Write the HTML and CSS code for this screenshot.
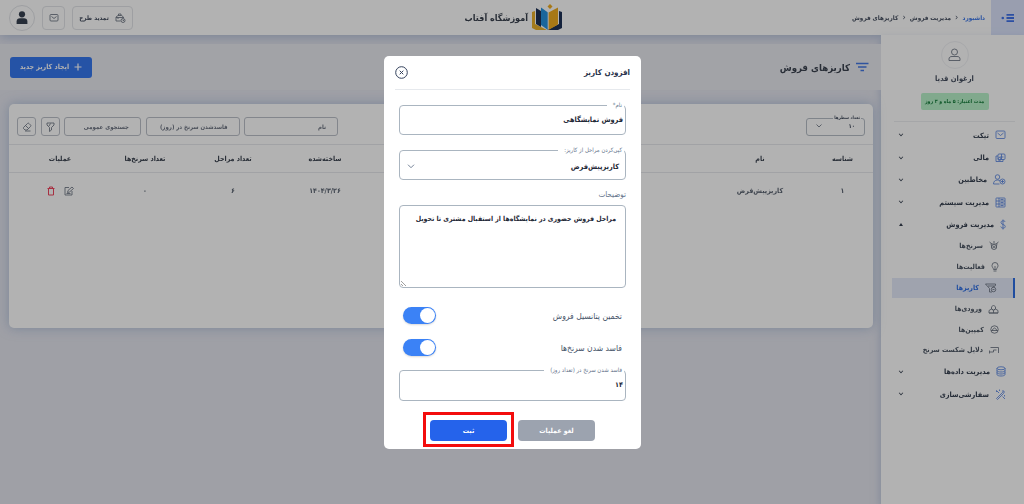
FILE: index.html
```html
<!DOCTYPE html>
<html lang="fa" dir="rtl">
<head>
    <meta charset="UTF-8">
    <meta name="viewport" content="width=device-width, initial-scale=1.0">
    <title>کاریزهای فروش</title>
    <link rel="stylesheet" href="styles.css">
</head>
<body>
    <!-- header -->
    <header class="header">
        <div class="menu-btn">
            <svg width="14" height="10" viewBox="0 0 14 10"><path d="M5.500 1.800H13M5.500 5H13M5.500 8.200H13" stroke="#3f72ea" stroke-width="1.800"/><circle cx="1.800" cy="5" r="1.300" fill="#3f72ea"/></svg>
        </div>
        <nav class="breadcrumb">
            <a class="active">داشبورد</a>
            <span class="sep">‹</span>
            <a>مدیریت فروش</a>
            <span class="sep">‹</span>
            <a>کاریزهای فروش</a>
        </nav>
        <div class="brand">
            <svg width="30" height="27" viewBox="0 0 30 27">
                <path d="M0 8l3-1v13l12 6H4l-4-2z" fill="#eab12c"/>
                <path d="M30 8l-3-1v13l-12 6h11l4-2z" fill="#1d3156"/>
                <path d="M4 4l5 3v16l-5-3z" fill="#1d3156"/>
                <path d="M9 3.5l7 5V26l-7-5z" fill="#2492e0"/>
                <path d="M26 3.5l-9.500 5V26l9.500-5.500z" fill="#f0ac20"/>
                <path d="M18 0l2.500 2.500L18 5l-2.500-2.500z" fill="#f0ac20"/>
                <path d="M16 8v18" stroke="#e9eef6" stroke-width=".7"/>
            </svg>
            <span>آموزشگاه آفتاب</span>
        </div>
        <div class="header-tools">
            <div class="plan-btn">
                <svg class="ic" width="11" height="10" viewBox="0 0 22 20"><path d="M2 16V8l4-3h7l4 3v2M2 9h14M7 5V2h5v3M2 16h9M6 9v3"/><circle cx="16" cy="15" r="4"/><path d="M16 13v2h2"/></svg>
                <span>تمدید طرح</span>
            </div>
            <div class="mail-btn">
                <svg class="ic" width="10" height="9" viewBox="0 0 20 18"><rect x="2" y="3" width="16" height="13" rx="2"/><path d="M5 7l5 4 5-4"/></svg>
            </div>
            <div class="avatar-btn">
                <svg width="12" height="13" viewBox="0 0 12 13"><circle cx="6" cy="3.300" r="3.100" fill="#374151"/><path d="M.6 13v-2.500C.6 8.500 2 7.300 4 7.300h4c2 0 3.400 1.200 3.400 3.200V13z" fill="#374151"/></svg>
            </div>
        </div>
    </header>

    <div class="wrapper">
        <!-- sidebar -->
        <aside class="sidebar">
            <div class="profile">
                <div class="profile-pic">
                    <svg class="ic" width="13" height="14" viewBox="0 0 26 28"><circle cx="13" cy="8" r="6"/><path d="M2 25v-3c0-4 3-5 6-5h10c3 0 6 1 6 5v3z"/></svg>
                </div>
                <div class="profile-name">ارغوان قدیا</div>
                <div class="credit">مدت اعتبار: ۵ ماه و ۳ روز</div>
            </div>
            <ul class="menu">
                <li><svg class="ic blue" width="11" height="10" viewBox="0 0 22 20"><rect x="2" y="2" width="18" height="15" rx="2"/><path d="M5 6l6 5 6-5"/></svg><span>تیکت</span><i class="arrow"></i></li>
                <li><svg class="ic blue" width="11" height="10" viewBox="0 0 22 20"><rect x="6" y="2" width="14" height="11" rx="2"/><path d="M6 6H2v11h14v-4M13 2v11M9 8h8"/><circle cx="9" cy="12" r="3"/></svg><span>مالی</span><i class="arrow"></i></li>
                <li><svg class="ic blue" width="13" height="11" viewBox="0 0 26 22"><circle cx="9" cy="6" r="4.500"/><path d="M1 20c0-5 3-8 8-8 2 0 4 .5 5 2M1 20h12"/><circle cx="19" cy="15" r="5"/><path d="M16 15h6M19 12v6"/></svg><span>مخاطبین</span><i class="arrow"></i></li>
                <li><svg class="ic blue" width="11" height="11" viewBox="0 0 22 22"><rect x="2" y="2" width="18" height="18" rx="1"/><path d="M2 8h18M2 14h18M8 2v18M11 5h6M11 11h6M11 17h6"/></svg><span>مدیریت سیستم</span><i class="arrow"></i></li>
                <li><svg class="ic blue" width="6" height="11" viewBox="0 0 12 22"><path d="M10.500 6C10 3 2 2.500 2 7c0 5 8.500 3 8.500 8 0 4.500-8.500 4-9 0M6 1v20"/></svg><span>مدیریت فروش</span><i class="arrow up"></i></li>
            </ul>
            <ul class="submenu">
                <li><svg class="ic" width="10" height="10" viewBox="0 0 20 20"><path d="M1 2l5 4h8l5-4M4 5l2 10M16 5l-2 10M8 2h4"/><circle cx="10" cy="12" r="5"/><path d="M8 12h4M10 10v4"/></svg><span>سرنخ‌ها</span></li>
                <li><svg class="ic" width="8" height="10" viewBox="0 0 16 20"><path d="M5 15c0-3-3-4-3-8a6 6 0 0 1 12 0c0 4-3 5-3 8zM5 18h6M8 8v6"/></svg><span>فعالیت‌ها</span></li>
                <li class="current"><svg class="ic" width="12" height="10" viewBox="0 0 24 20"><path d="M1 2h20v3l-6 4M1 2l8 9v7h5M6 6h13"/><circle cx="17" cy="13" r="4.500"/><path d="M15 13h4"/></svg><span>کاریزها</span></li>
                <li><svg class="ic" width="11" height="10" viewBox="0 0 22 20"><path d="M7 10V6l4-4 4 4v4l-4 2zM2 18v-5l5-3 4 3 4-3 5 3v5zM11 13v5M2 18h18"/></svg><span>ورودی‌ها</span></li>
                <li><svg class="ic" width="9" height="9" viewBox="0 0 18 18"><circle cx="9" cy="9" r="7.500"/><path d="M5 12V9l4-3 4 3v3M2 11h14"/></svg><span>کمپین‌ها</span></li>
                <li><svg class="ic" width="10" height="8" viewBox="0 0 20 16"><path d="M3 3h16v11M15 8H9v4H1M1 9v6"/></svg><span>دلایل شکست سرنخ</span></li>
            </ul>
            <ul class="menu">
                <li><svg class="ic blue" width="10" height="11" viewBox="0 0 20 22"><ellipse cx="10" cy="4.500" rx="8" ry="3"/><path d="M2 4v13c0 4 16 4 16 0V4M2 9c0 4 16 4 16 0M2 13c0 4 16 4 16 0"/></svg><span>مدیریت داده‌ها</span><i class="arrow"></i></li>
                <li><svg class="ic blue" width="11" height="11" viewBox="0 0 22 22"><path d="M3 19L15 7l2 2L5 21zM16 2v4h4M3 3l5 5M3 3v3M15 15l5 5M19 12v3M9 1v3"/></svg><span>سفارشی‌سازی</span><i class="arrow"></i></li>
            </ul>
        </aside>

        <!-- content -->
        <main class="content">
            <div class="page-title">
                <svg width="13" height="10" viewBox="0 0 13 10"><path d="M0 1.500h12.500M2 5h8.500M4.500 8.500h3.500" stroke="#4478e2" stroke-width="1.500"/></svg>
                <h1>کاریزهای فروش</h1>
                <button class="create-btn"><svg width="8" height="8" viewBox="0 0 8 8"><path d="M4 .5v7M.5 4h7" stroke="#fff" stroke-width="1.200"/></svg><span>ایجاد کاریز جدید</span></button>
            </div>
            <div class="card">
                <div class="filters">
                    <fieldset class="rows-select">
                        <legend>تعداد سطرها</legend>
                        <span>۱۰</span>
                        <svg class="ic" width="6" height="4" viewBox="0 0 12 8"><path d="M1 1l5 5 5-5"/></svg>
                    </fieldset>
                    <div class="filter-box">نام</div>
                    <div class="filter-box">فاسدشدن سرنخ در (روز)</div>
                    <div class="filter-box small">جستجوی عمومی</div>
                    <div class="filter-icon"><svg class="ic" width="9" height="10" viewBox="0 0 18 20"><path d="M2 2h14v4l-5 5v5l-4 3v-8L2 6zM9 3L6 8"/></svg></div>
                    <div class="filter-icon"><svg class="ic" width="10" height="10" viewBox="0 0 20 20"><path d="M3 11l8-8c1-1 2-1 3 0l3 3c1 1 1 2 0 3l-7 7H6l-3-3c-.6-.6-.6-1.400 0-2zM7 7l6 6M6 18h11"/></svg></div>
                </div>
                <div class="row head">
                    <div>شناسه</div><div>نام</div><div>توضیحات</div><div></div><div>ساخته‌شده</div><div>تعداد مراحل</div><div>تعداد سرنخ‌ها</div><div>عملیات</div>
                </div>
                <div class="row">
                    <div>۱</div><div>کاریزپیش‌فرض</div><div></div><div></div><div>۱۴۰۴/۳/۲۶</div><div>۶</div><div>۰</div>
                    <div class="actions">
                        <svg class="ic" width="10" height="10" viewBox="0 0 20 20"><path d="M10 3H2v15h14v-8M7 13l1-4 8-7 3 3-8 7zM5 15h8"/></svg>
                        <svg class="ic red" width="8" height="10" viewBox="0 0 16 20"><path d="M1 5h14M5 5V2h6v3M3 5v13h10V5"/></svg>
                    </div>
                </div>
            </div>
        </main>
    </div>

    <!-- modal -->
    <div class="overlay">
        <div class="modal">
            <div class="modal-head">
                <h2>افزودن کاریز</h2>
                <svg width="13" height="13" viewBox="0 0 13 13"><circle cx="6.500" cy="6.500" r="5.800" fill="none" stroke="#33415c"/><path d="M4.700 4.700l3.600 3.600M8.300 4.700L4.700 8.300" stroke="#33415c"/></svg>
            </div>
            <div class="modal-body">
                <fieldset class="field name-field">
                    <legend>نام*</legend>
                    <span>فروش نمایشگاهی</span>
                </fieldset>
                <fieldset class="field select-field">
                    <legend>کپی‌کردن مراحل از کاریز:</legend>
                    <span>کاریزپیش‌فرض</span>
                    <svg width="8" height="5" viewBox="0 0 8 5"><path d="M1 .7l3 3 3-3" fill="none" stroke="#64748b" stroke-width=".9"/></svg>
                </fieldset>
                <div class="label">توضیحات</div>
                <div class="textarea">
                    <span>مراحل فروش حضوری در نمایشگاه‌ها از استقبال مشتری تا تحویل</span>
                    <svg class="grip" width="5" height="5" viewBox="0 0 5 5"><path d="M0 0l5 5M0 3l2 2" stroke="#777" stroke-width=".7"/></svg>
                </div>
                <div class="switch-row"><span>تخمین پتانسیل فروش</span><div class="switch"><i></i></div></div>
                <div class="switch-row second"><span>فاسد شدن سرنخ‌ها</span><div class="switch"><i></i></div></div>
                <fieldset class="field days-field">
                    <legend>فاسد شدن سرنخ در (تعداد روز)</legend>
                    <span>۱۴</span>
                </fieldset>
            </div>
            <div class="modal-foot">
                <button class="cancel">لغو عملیات</button>
                <button class="submit">ثبت<i class="mark"></i></button>
            </div>
        </div>
    </div>
</body>
</html>
```
FILE: styles.css
```css
* {
    margin: 0;
    padding: 0;
    box-sizing: border-box;
}
body {
    width: 1024px;
    height: 504px;
    overflow: hidden;
    background: #e4e5ee;
    font-family: "DejaVu Sans Condensed", "DejaVu Sans", sans-serif;
    font-stretch: condensed;
    font-size: 7px;
    font-weight: bold;
    color: #475061;
}
ul {
    list-style: none;
}
button {
    border: none;
    font: inherit;
}
.ic {
    fill: none;
    stroke: #6b7482;
    stroke-width: 1.7;
    flex: none;
}
.blue {
    stroke: #5b86e0;
}
.red {
    stroke: #f0455e;
    stroke-width: 2;
}

/* the page behind the modal is slightly blurred */
.header,
.wrapper {
    filter: blur(.4px);
}

/* header */
.header {
    height: 35px;
    display: flex;
    align-items: center;
    background: #fff;
    position: relative;
    box-shadow: 0 2px 11px rgba(130, 155, 195, .55);
}
.menu-btn {
    width: 33px;
    height: 35px;
    background: #dbe3fb;
    display: flex;
    align-items: center;
    justify-content: center;
}
.breadcrumb {
    width: 139px;
    padding-right: 6px;
    display: flex;
    align-items: center;
    justify-content: space-between;
    font-size: 6.3px;
    white-space: nowrap;
}
.breadcrumb .active {
    color: #3b76e8;
}
.sep {
    font-size: 9px;
    line-height: 9px;
    font-weight: normal;
}
.brand {
    width: 284px;
    margin-right: auto;
    display: flex;
    align-items: center;
    gap: 4px;
    font-size: 9px;
    color: #3b4350;
    white-space: nowrap;
}
.header-tools {
    width: 278px;
    padding-left: 9px;
    display: flex;
    align-items: center;
    justify-content: flex-end;
    gap: 7px;
}
.plan-btn,
.mail-btn,
.avatar-btn {
    height: 24px;
    border: 1px solid #e2e4e8;
    border-radius: 4px;
    display: flex;
    align-items: center;
    justify-content: center;
    gap: 6px;
}
.plan-btn {
    width: 61px;
    font-size: 6.3px;
}
.mail-btn {
    width: 23px;
}
.avatar-btn {
    width: 26px;
    height: 26px;
    border-radius: 50%;
    border-width: 1.5px;
}

/* sidebar */
.wrapper {
    height: 469px;
    display: flex;
    position: relative;
}
.sidebar {
    width: 143px;
    background: #fff;
    box-shadow: 0 4px 8px rgba(130, 155, 195, .5);
}
.profile {
    height: 87px;
    margin: 0 9px 2px 13px;
    padding-top: 6px;
    border-bottom: 1px solid #eceef1;
    display: flex;
    flex-direction: column;
    align-items: center;
}
.profile-pic {
    width: 28px;
    height: 28px;
    border-radius: 50%;
    border: 1px solid #f0f1f4;
    display: flex;
    align-items: center;
    justify-content: center;
}
.profile-name {
    height: 20px;
    line-height: 20px;
    font-size: 7.5px;
}
.credit {
    width: 68px;
    height: 17px;
    line-height: 16px;
    margin-top: 4px;
    text-align: center;
    font-size: 5.2px;
    white-space: nowrap;
    color: #19803e;
    background: #b9f2cb;
    border-radius: 2px;
}
.menu li {
    height: 22.4px;
    padding: 0 18px;
    display: flex;
    align-items: center;
    gap: 6px;
    font-size: 7.3px;
    color: #374151;
}
.arrow {
    margin-right: auto;
    width: 4px;
    height: 4px;
    border: solid #374151;
    border-width: 0 1.4px 1.4px 0;
    transform: translateY(-1px) rotate(45deg) scale(.8);
}
.arrow.up {
    width: 0;
    height: 0;
    border: solid transparent;
    border-width: 0 2.5px 3px;
    border-bottom-color: #374151;
    transform: none;
}
.submenu li {
    height: 20.8px;
    margin: 0 9px 0 11px;
    padding-right: 16px;
    display: flex;
    align-items: center;
    gap: 6px;
    color: #4b5563;
}
.submenu .current {
    color: #2f6fe4;
    background: #e4eafa;
    border-right: 2px solid #2f6fe4;
    padding-right: 16px;
}

/* content */
.content {
    flex: 1;
    padding-top: 9px;
}
.page-title {
    height: 46px;
    padding: 0 12px 0 10px;
    display: flex;
    align-items: center;
    gap: 6px;
    background: #e9eaf0;
}
.page-title h1 {
    font-size: 9.6px;
    color: #3b4350;
}
.create-btn {
    width: 82px;
    height: 21px;
    margin-right: auto;
    border-radius: 3px;
    display: flex;
    align-items: center;
    justify-content: center;
    gap: 5px;
    font-size: 7px;
    color: #fff;
    background: #3677ee;
}
.card {
    height: 224px;
    margin: 14px 8px 0 9px;
    border-radius: 5px;
    background: #fff;
    box-shadow: 0 0 12px rgba(130, 160, 200, .55);
}
.filters {
    height: 40px;
    padding: 13px 8px 0;
    display: flex;
    gap: 4.5px;
}
.rows-select {
    width: 59px;
    height: 20px;
    margin: -1px 0 0 auto;
    padding: 0 9px 4px;
    border: 1px solid #b7bdc6;
    border-radius: 3px;
    display: flex;
    align-items: center;
    justify-content: space-between;
    font-size: 6px;
}
.rows-select legend {
    margin-right: -6px;
    padding: 0 1px;
    font-size: 4.5px;
    line-height: 4px;
}
.filter-box {
    width: 94px;
    height: 19px;
    padding: 0 11px;
    line-height: 17px;
    border: 1px solid #bcc1c9;
    border-radius: 3px;
    font-size: 6px;
    color: #6b7280;
    white-space: nowrap;
}
.filter-box.small {
    width: 77px;
}
.filter-icon {
    width: 19px;
    height: 19px;
    border: 1px solid #bcc1c9;
    border-radius: 3px;
    display: flex;
    align-items: center;
    justify-content: center;
}
.row {
    height: 36px;
    padding-left: 8px;
    display: grid;
    grid-template-columns: 61px 104px 158px 179px 92px 92px 84px 86px;
    align-items: center;
    text-align: center;
    color: #5b6472;
}
.row.head {
    height: 29px;
    border: solid #e7e9ec;
    border-width: 1px 0;
    color: #3b4350;
}
.row.head div:nth-child(3) {
    padding-right: 6px;
}
.actions {
    display: flex;
    justify-content: center;
    gap: 9px;
}

/* modal */
.overlay {
    position: fixed;
    inset: 0;
    padding: 1px 0 0 1px;
    display: flex;
    align-items: center;
    justify-content: center;
    background: rgba(0, 0, 0, .3);
}
.modal {
    width: 257px;
    height: 393px;
    padding: 0 11px;
    border-radius: 5px;
    background: #fff;
    color: #1f2937;
}
.modal-head {
    height: 34px;
    display: flex;
    align-items: center;
    justify-content: space-between;
    border-bottom: 1px solid #e6e9ed;
}
.modal-head h2 {
    font-size: 7.9px;
    color: #27324a;
}
.modal-body {
    padding: 12px 4px 0;
}
.field {
    width: 227px;
    padding: 0 2px;
    border: 1px solid #aab5c0;
    border-radius: 4px;
    display: flex;
    justify-content: space-between;
    align-items: center;
    font-size: 7.3px;
}
.field legend {
    margin-right: -1px;
    padding: 0 2px 0 6px;
    font-size: 6px;
    line-height: 6px;
    font-weight: normal;
    color: #64748b;
}
.name-field {
    height: 33px;
    padding-bottom: 4px;
}
.select-field {
    height: 33px;
    margin-top: 12px;
    padding: 0 6px 0 7px;
}
.select-field legend {
    margin-right: -5px;
}
.label {
    height: 25px;
    line-height: 29px;
    font-size: 8px;
    font-weight: normal;
    color: #64748b;
}
.textarea {
    height: 83px;
    padding: 9px;
    border: 1px solid #aab5c0;
    border-radius: 4px;
    position: relative;
    font-size: 6.9px;
    white-space: nowrap;
}
.grip {
    position: absolute;
    left: 1px;
    bottom: 1px;
}
.switch-row {
    height: 17px;
    margin: 19px 4px 0;
    display: flex;
    align-items: center;
    justify-content: space-between;
    font-size: 8.5px;
    font-weight: normal;
    color: #475569;
}
.switch-row.second {
    margin-top: 15px;
}
.switch {
    width: 33px;
    height: 17px;
    padding: 1px;
    border-radius: 9px;
    background: #3b82f6;
    box-shadow: 0 1px 2px rgba(0, 0, 0, .15);
}
.switch i {
    display: block;
    width: 15px;
    height: 15px;
    border-radius: 50%;
    background: #fff;
}
.days-field {
    height: 34px;
    margin-top: 11px;
    padding-bottom: 5px;
}
.modal-foot {
    margin-top: 19px;
    padding-right: 35px;
    display: flex;
    gap: 11px;
}
.modal-foot button {
    width: 77px;
    height: 21px;
    border-radius: 4px;
    font-size: 7px;
    color: #fff;
    position: relative;
}
.cancel {
    background: #9ca3af;
}
.submit {
    background: #2563eb;
}
/* red frame around the submit button */
.mark {
    position: absolute;
    top: -8px;
    left: -7px;
    width: 91px;
    height: 35px;
    border: 3px solid #f30d0d;
}
```
